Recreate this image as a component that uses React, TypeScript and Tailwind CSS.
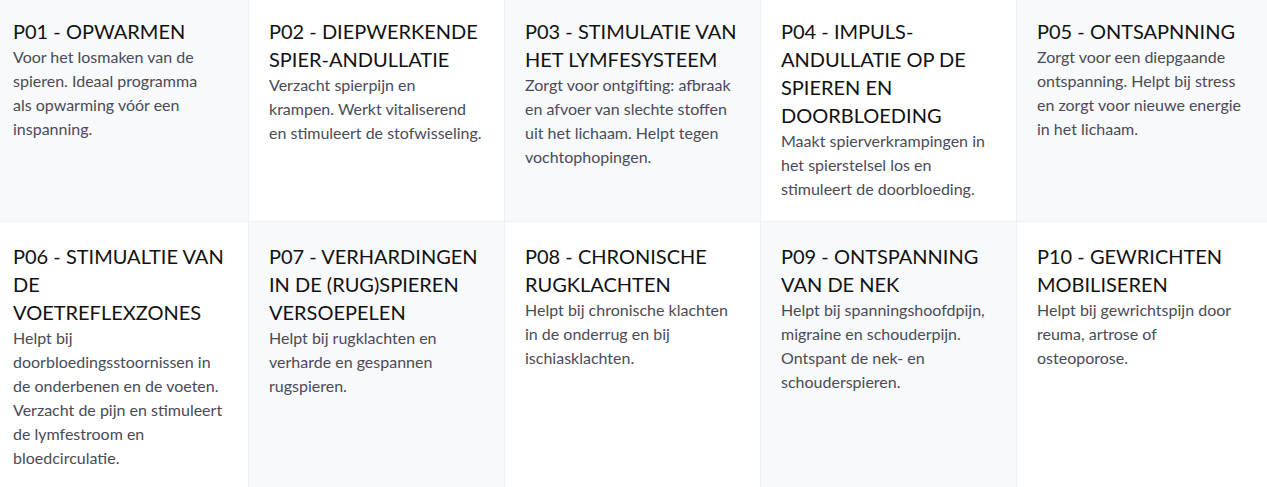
const programs = [
  {
    title: "P01 - OPWARMEN",
    text: "Voor het losmaken van de spieren. Ideaal programma als\u00a0opwarming vóór een inspanning.",
  },
  {
    title: "P02 - DIEPWERKENDE SPIER-ANDULLATIE",
    text: "Verzacht spierpijn en krampen. Werkt vitaliserend en stimuleert de stofwisseling.",
  },
  {
    title: "P03 - STIMULATIE VAN HET LYMFESYSTEEM",
    text: "Zorgt voor ontgifting: afbraak en afvoer van slechte stoffen uit het lichaam. Helpt tegen vochtophopingen.",
  },
  {
    title: "P04 - IMPULS-ANDULLATIE OP DE SPIEREN EN DOORBLOEDING",
    text: "Maakt spierverkrampingen in het spierstelsel los en stimuleert de doorbloeding.",
  },
  {
    title: "P05 - ONTSAPNNING",
    text: "Zorgt voor een diepgaande ontspanning. Helpt bij stress en zorgt voor nieuwe energie in het lichaam.",
  },
  {
    title: "P06 - STIMUALTIE VAN DE VOETREFLEXZONES",
    text: "Helpt bij doorbloedingsstoornissen in de onderbenen en de voeten. Verzacht de pijn en stimuleert de lymfestroom en bloedcirculatie.",
  },
  {
    title: "P07 - VERHARDINGEN IN DE (RUG)SPIEREN VERSOEPELEN",
    text: "Helpt bij rugklachten en verharde en gespannen rugspieren.",
  },
  {
    title: "P08 - CHRONISCHE RUGKLACHTEN",
    text: "Helpt bij chronische klachten in de onderrug en bij ischiasklachten.",
  },
  {
    title: "P09 - ONTSPANNING VAN DE NEK",
    text: "Helpt bij spanningshoofdpijn, migraine en schouderpijn. Ontspant de nek- en schouderspieren.",
  },
  {
    title: "P10 - GEWRICHTEN MOBILISEREN",
    text: "Helpt bij gewrichtspijn door reuma, artrose of osteoporose.",
  },
];

export default function App() {
  return (
    <div className="h-[487px] w-[1267px] overflow-hidden bg-white font-['Lato',sans-serif]">
      <div className="-ml-[7px] -mt-[3px] grid w-[1279px] grid-cols-5 gap-px bg-[#eef1f5]">
        {programs.map((p, i) => (
          <div
            key={p.title}
            className={`p-5 ${i % 2 === 0 ? "bg-[#f8f9fb]" : "bg-white"}`}
          >
            <h3 className="text-[20px] leading-[28px] font-normal text-[#111111]">
              {p.title}
            </h3>
            <p className="pr-[2px] text-[16px] leading-[24px] text-[#4a4b57]">
              {p.text}
            </p>
          </div>
        ))}
      </div>
    </div>
  );
}
